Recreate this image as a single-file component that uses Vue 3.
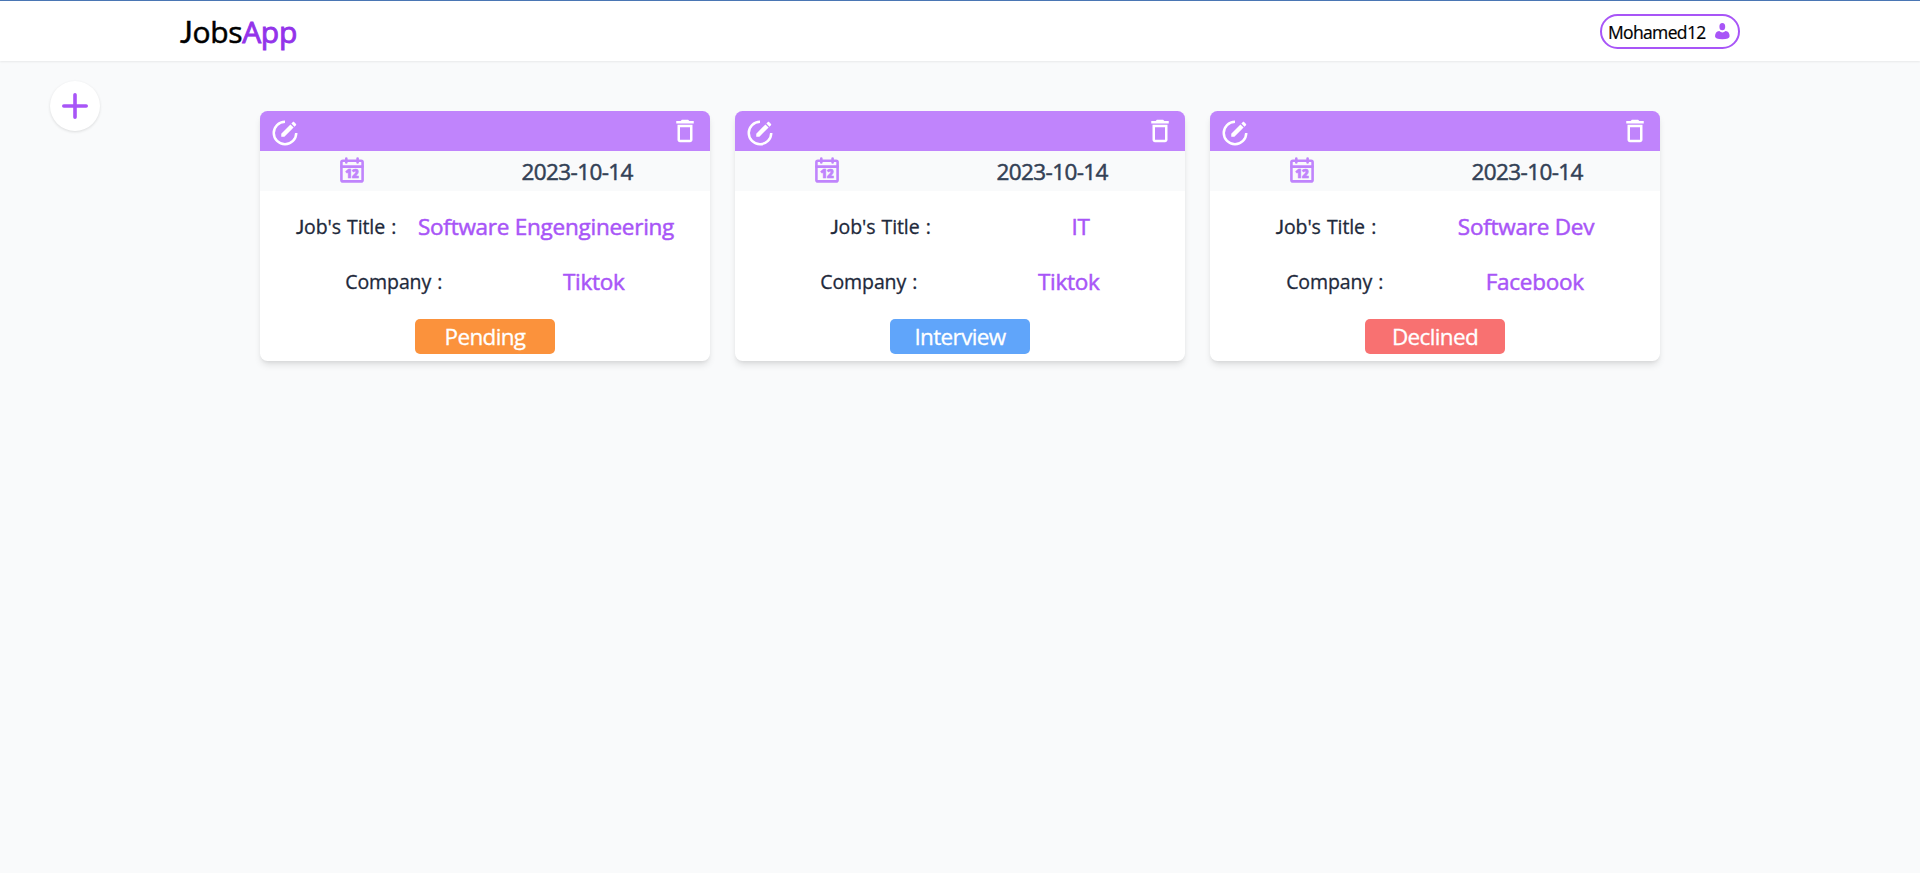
<script setup>
const jobs = [
  { id: 1, date: '2023-10-14', title: 'Software Engengineering', company: 'Tiktok', status: 'Pending' },
  { id: 2, date: '2023-10-14', title: 'IT', company: 'Tiktok', status: 'Interview' },
  { id: 3, date: '2023-10-14', title: 'Software Dev', company: 'Facebook', status: 'Declined' },
]
</script>

<template>
  <div class="page">
    <header class="navbar">
      <div class="logo"><span class="initial">J</span>obs<span class="accent">App</span></div>
      <button class="user">
        <span class="user-name">Mohamed12</span>
        <svg class="user-icon" viewBox="0 0 15 17">
          <ellipse cx="7.3" cy="3.7" rx="2.9" ry="3.6" />
          <path d="M4.2 8 Q7.4 10.8 10.6 8 Q14.6 8.6 14.6 13.2 Q14.6 16.2 7.3 16.2 Q0 16.2 0 13.2 Q0.2 8.6 4.2 8Z" />
        </svg>
      </button>
    </header>

    <main class="content">
      <button class="add" aria-label="Add job">
        <svg viewBox="0 0 26 26"><path d="M13 1.8V24.2M1.8 13H24.2" /></svg>
      </button>
      <section class="cards">
        <article v-for="job in jobs" :key="job.id" class="card">
          <div class="card-head">
            <svg class="icon edit" viewBox="0 0 24 24">
              <path d="M12 2A10 10 0 0 0 2 12 10 10 0 0 0 12 22 10 10 0 0 0 22 12H20A8 8 0 0 1 12 20 8 8 0 0 1 4 12 8 8 0 0 1 12 4V2M18.78 3C18.61 3 18.43 3.07 18.3 3.2L17.08 4.41 19.58 6.91 20.8 5.7C21.06 5.44 21.06 5 20.8 4.75L19.25 3.2C19.12 3.07 18.95 3 18.78 3M16.37 5.12L9 12.5V15H11.5L18.87 7.62 16.37 5.12Z" />
            </svg>
            <svg class="icon" viewBox="0 0 24 24">
              <path d="M6 19c0 1.1.9 2 2 2h8c1.1 0 2-.9 2-2V7H6v12zM8 9h8v10H8V9zm7.5-5l-1-1h-5l-1 1H5v2h14V4z" />
            </svg>
          </div>
          <div class="card-date">
            <svg class="calendar" viewBox="0 0 30 30">
              <rect x="4.4" y="4.8" width="21.2" height="20.6" rx="1.5" />
              <path d="M4.4 10.6H25.6M9.3 2.5V6.5M20.6 2.5V6.5" />
              <text x="15.1" y="21.8" text-anchor="middle">12</text>
            </svg>
            <time class="date">{{ job.date }}</time>
          </div>
          <div class="row">
            <span class="label"><span class="initial">J</span>ob's Title :</span>
            <span class="value">{{ job.title }}</span>
          </div>
          <div class="row">
            <span class="label">Company :</span>
            <span class="value">{{ job.company }}</span>
          </div>
          <div class="status" :class="job.status.toLowerCase()">{{ job.status }}</div>
        </article>
      </section>
    </main>
  </div>
</template>

<style>
body {
  background: #f9fafb;
}
</style>

<style scoped>
.page {
  min-height: 873px;
  background: #f9fafb;
  font-family: "Open Sans", "Noto Sans", sans-serif;
  color: #000;
}
button {
  font: inherit;
  color: inherit;
  padding: 0;
  background: #fff;
  border: 0;
}
.navbar {
  box-sizing: border-box;
  height: 61px;
  padding: 1px 180px 0;
  border-top: 1px solid #4a76b4;
  background: #fff;
  box-shadow: 0 1px 2px rgba(0, 0, 0, 0.07);
  display: flex;
  align-items: center;
  justify-content: space-between;
}
.logo {
  font-size: 30px;
  line-height: 40px;
  letter-spacing: -0.3px;
  margin-bottom: 1px;
  -webkit-text-stroke: 0.5px currentColor;
}
.initial {
  font-family: Lato, sans-serif;
}
.accent {
  color: #9333ea;
  -webkit-text-stroke-width: 0.9px;
}
.user {
  box-sizing: border-box;
  width: 140px;
  height: 35px;
  padding: 0 8px 0 6px;
  border: 2px solid #a855f7;
  border-radius: 18px;
  display: flex;
  align-items: center;
  justify-content: space-between;
}
.user-name {
  font-size: 17.5px;
  letter-spacing: -0.65px;
  -webkit-text-stroke: 0.2px currentColor;
}
.user-icon {
  width: 15px;
  height: 17px;
  fill: #a855f7;
}
.content {
  display: flex;
  padding: 20px 50px;
}
.add {
  width: 50px;
  height: 50px;
  flex: none;
  border-radius: 50%;
  box-shadow: 0 1px 3px rgba(0, 0, 0, 0.12);
  display: flex;
  align-items: center;
  justify-content: center;
}
.add svg {
  width: 26px;
  height: 26px;
  fill: none;
  stroke: #a855f7;
  stroke-width: 3.6;
  stroke-linecap: round;
}
.cards {
  display: grid;
  grid-template-columns: repeat(3, 450px);
  gap: 25px;
  margin: 30px 0 0 160px;
}
.card {
  height: 250px;
  border-radius: 7.5px;
  background: #fff;
  box-shadow: 0 5px 7px -1px rgba(0, 0, 0, 0.1), 0 2px 4px -2px rgba(0, 0, 0, 0.1);
  overflow: hidden;
}
.card-head {
  box-sizing: border-box;
  height: 40px;
  padding: 5px 10px;
  background: #c084fc;
  display: flex;
  justify-content: space-between;
}
.icon {
  width: 30px;
  height: 30px;
  fill: #fff;
}
.edit {
  margin-top: 2px;
}
.card-date {
  height: 40px;
  background: #f9fafb;
  display: flex;
  align-items: center;
  justify-content: space-around;
}
.calendar {
  width: 30px;
  height: 30px;
  fill: none;
  stroke: #c084fc;
  stroke-width: 2.6;
  stroke-linecap: round;
}
.calendar text {
  fill: #c084fc;
  stroke-width: 0.7;
  font-size: 11.5px;
  font-weight: 800;
}
.date {
  font-size: 22.5px;
  color: #334155;
  letter-spacing: -0.6px;
  padding-top: 1px;
  -webkit-text-stroke: 0.5px currentColor;
}
.row {
  height: 55px;
  padding: 0 25px;
  display: flex;
  align-items: center;
  justify-content: space-around;
}
.card-date + .row {
  margin-top: 8px;
}
.label {
  font-size: 19.5px;
  color: #1e293b;
  letter-spacing: -0.1px;
  word-spacing: 1.2px;
  white-space: nowrap;
  -webkit-text-stroke: 0.3px currentColor;
}
.value {
  font-size: 22.5px;
  color: #a855f7;
  letter-spacing: -0.25px;
  white-space: nowrap;
  -webkit-text-stroke: 0.5px currentColor;
}
.status {
  width: 140px;
  height: 35px;
  margin: 10px auto 0;
  border-radius: 5px;
  color: #fff;
  font-size: 22.5px;
  line-height: 36px;
  letter-spacing: -0.65px;
  text-align: center;
  -webkit-text-stroke: 0.3px currentColor;
}
.pending {
  background: #fb923c;
}
.interview {
  background: #60a5fa;
}
.declined {
  background: #f87171;
}
</style>
